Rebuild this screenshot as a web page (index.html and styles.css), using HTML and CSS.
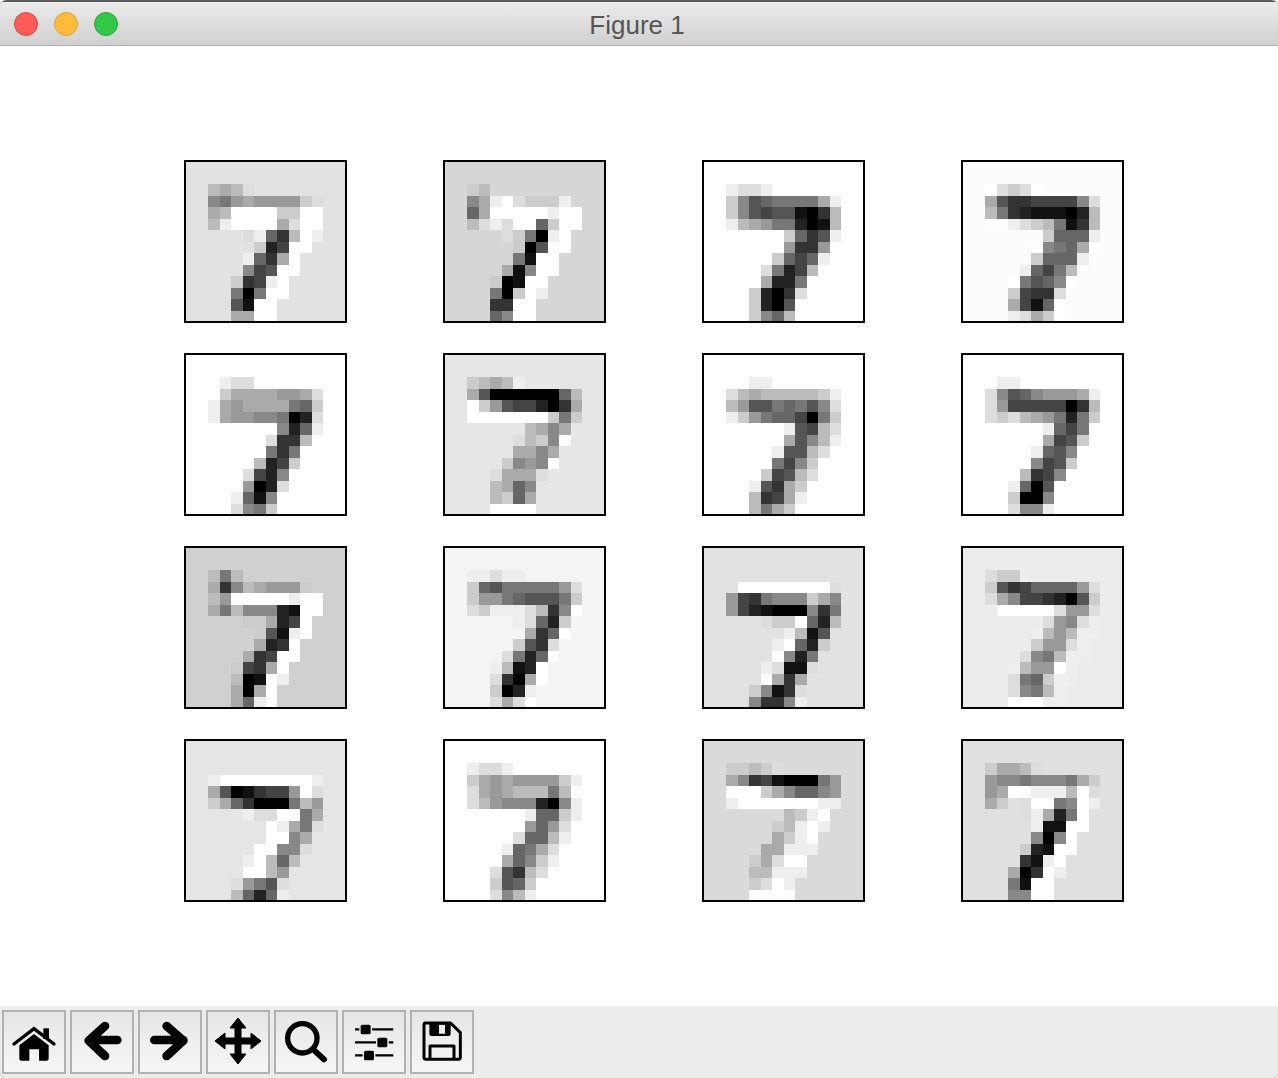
FILE: index.html
```html
<!DOCTYPE html>
<html lang="en">
<head>
  <meta charset="UTF-8" />
  <title>Figure 1</title>
  <link rel="stylesheet" href="styles.css" />
</head>
<body>
  <div class="window">
    <header class="titlebar">
      <div class="lights">
        <span class="light red"></span>
        <span class="light yellow"></span>
        <span class="light green"></span>
      </div>
      <div class="title">Figure 1</div>
    </header>

    <main class="figure">
      <div class="subplots" id="subplots"></div>
    </main>

    <!-- matplotlib toolbar -->
    <footer class="toolbar">
      <button class="tool" title="Home">
        <svg viewBox="12 36 180 180">
          <rect x="130" y="85" width="17" height="32" />
          <path d="M42 132 L102 86 L162 132" class="roof" />
          <path d="M58 136 L102 102 L146 136 V176 Q146 182 140 182 H117 V148 H88 V182 H64 Q58 182 58 176 Z" />
        </svg>
      </button>
      <button class="tool" title="Back">
        <svg viewBox="216 36 180 180">
          <path d="M268 120 H352 M315 78 L266 122 L315 168" class="arrow" />
        </svg>
      </button>
      <button class="tool" title="Forward">
        <svg viewBox="420 36 180 180">
          <path d="M463 120 H550 M500 78 L550 122 L500 168" class="arrow" />
        </svg>
      </button>
      <button class="tool" title="Pan">
        <svg viewBox="208 1012 60 60">
          <rect x="234.500" y="1024" width="7" height="34" />
          <rect x="222" y="1037.500" width="32" height="7" />
          <path d="M215 1041 L225 1033 V1049 Z M261 1041 L251 1033 V1049 Z M238 1018 L230 1028 H246 Z M238 1064 L230 1054 H246 Z" class="head" />
        </svg>
      </button>
      <button class="tool" title="Zoom">
        <svg viewBox="108 36 180 180">
          <circle cx="187" cy="115" r="44" class="lens" />
          <path d="M226 154 L252 178" class="grip" />
        </svg>
      </button>
      <button class="tool" title="Configure subplots">
        <svg viewBox="312 36 180 180">
          <path d="M345 88 H358 M396 88 H460 M345 127 H408 M446 127 H460 M345 166 H368 M406 166 H460" class="rail" />
          <rect x="362" y="74" width="30" height="29" rx="5" />
          <rect x="412" y="113" width="30" height="29" rx="5" />
          <rect x="372" y="152" width="30" height="29" rx="5" />
        </svg>
      </button>
      <button class="tool" title="Save">
        <svg viewBox="516 36 180 180">
          <path d="M554 69 H632 L661 98 V172 Q661 178 655 178 H558 Q552 178 552 172 V75 Q552 69 554 69 Z" class="disk" />
          <path d="M568 69 H632 V102 Q632 108 626 108 H574 Q568 108 568 102 Z M597 74 V101 H615 V74 Z" fill-rule="evenodd" />
          <path d="M570 176 V138 H642 V176" class="label" />
        </svg>
      </button>
    </footer>
  </div>

  <script src="draw.js"></script>
</body>
</html>
```

FILE: styles.css
```css
html, body {
  margin: 0;
  height: 100%;
  background-color: #fff;
  overflow: hidden;
}

.window {
  height: 1078px;
  display: flex;
  flex-direction: column;
  border-radius: 7px;
  overflow: hidden;
  box-shadow: 0 0 2px rgba(0, 0, 0, 0.7);
  font-family: "Liberation Sans", Arial, sans-serif;
}

/* title bar */
.titlebar {
  height: 43px;
  flex: none;
  display: flex;
  align-items: center;
  position: relative;
  border-top: 2px solid #5a5a5a;
  border-bottom: 1px solid #b2b2b2;
  background: linear-gradient(#ebebeb, #d0d0d0);
}

.lights {
  display: flex;
  gap: 16px;
  padding-left: 14px;
}

.light {
  width: 24px;
  height: 24px;
  box-sizing: border-box;
  border-radius: 50%;
  border: 1px solid;
}

.light.red {
  background-color: #fc5b57;
  border-color: #e2463f;
}

.light.yellow {
  background-color: #fdbc40;
  border-color: #dfa033;
}

.light.green {
  background-color: #33c748;
  border-color: #27a93a;
}

.title {
  position: absolute;
  top: 8px;
  left: 0;
  right: 4px;
  text-align: center;
  font-size: 26px;
  color: #555;
}

/* figure */
.figure {
  flex: 1;
  background-color: #fff;
  padding: 114px 0 0 184px;
}

.subplots {
  display: grid;
  grid-template-columns: repeat(4, 163px);
  grid-auto-rows: 163px;
  column-gap: 96px;
  row-gap: 30px;
}

/* the spine sits centred on the edge of the image, like matplotlib draws it */
.axes {
  display: block;
  width: 161px;
  height: 161px;
  margin: 1px;
  outline: 2px solid #000;
  outline-offset: -1px;
  image-rendering: pixelated;
  filter: blur(0.4px);
}

/* toolbar */
.toolbar {
  height: 72px;
  flex: none;
  box-sizing: border-box;
  display: flex;
  gap: 4px;
  padding: 4px 2px;
  background-color: #ececec;
}

.tool {
  width: 64px;
  height: 64px;
  padding: 0;
  box-sizing: border-box;
  border: 2px solid #b1b1b1;
  background: linear-gradient(#e6e6e6, #f6f6f6);
}

.tool svg {
  display: block;
  width: 60px;
  height: 60px;
  fill: #000;
}

.roof {
  fill: none;
  stroke: #000;
  stroke-width: 10;
  stroke-linecap: round;
}

.arrow {
  fill: none;
  stroke: #000;
  stroke-width: 26;
  stroke-linecap: round;
  stroke-linejoin: round;
}

.head {
  stroke: #000;
  stroke-width: 1;
  stroke-linejoin: round;
}

.lens {
  fill: none;
  stroke: #000;
  stroke-width: 16;
}

.grip {
  fill: none;
  stroke: #000;
  stroke-width: 18;
  stroke-linecap: round;
}

.rail {
  fill: none;
  stroke: #000;
  stroke-width: 7;
}

.disk,
.label {
  fill: none;
  stroke: #000;
  stroke-width: 9;
  stroke-linejoin: round;
}
```

FILE: draw.js
```js
// Each digit is 14x14, the rows below start at row 2 and column 2.
// One hex digit per cell (grey level), "." is the background of the plot.
const digits = [
  ["e2", ["babd......", "879a9999cd", "abffffccff", "beffffadff", "...de63bfe", "....c24ff.", "...e63af..", "...845ff..", "..c34ef...", "..707ff...", "..51ff....", "..aaff...."]],
  ["d6", ["cb........", "8aefdccce.", "6afffffeff", "bdedff6cff", "...dc70ef.", "....c05ff.", "....71ff..", "...a18ff..", "..c01ff...", "..70cfe...", "..33ff....", "..68ff...."]],
  ["ff", ["eddef.....", "c8567777ae", "c85455103b", "eba977201b", "...ffc635e", "....f9339.", "...fc646e.", "...d724b..", "..fa227f..", "..c203d...", "..c205f...", "..c86b...."]],
  ["fc", ["fdcdf.....", "a53344448d", "b73211102b", "ffedcb713b", ".....c666e", "....f876af", "....c666e.", "...e647b..", "..f7568f..", "..c433d...", "..a416f...", "..edacf..."]],
  ["ff", [".eddf.....", "fcaaaa99ad", "ea9aaaa76c", "ea9988702d", "...fff826e", ".....d33b.", "....f737f.", "....b24c..", "...d428f..", "...902d...", "..e618f...", "..d87c...."]],
  ["e6", ["cbabe.....", "a50000006b", "fc9544203a", "fffffffc7c", ".....ba8a.", "....dbc8f.", "....aa8a..", "...c898f..", "..daaad...", "..ba68....", "..bc6a....", "..ffff...."]],
  ["ff", [".feef.....", "dbabbbbbce", "b95576758d", "ec9766407c", "..fffe54bd", "....fa58be", "....e55bd.", "...f748cf.", "...c45bd..", "..e53acf..", "..b34ae...", "..b7acf..."]],
  ["ff", [".eef......", "d8568999ae", "d94444403b", "dcdba9727c", "...ffe647f", ".....a45c.", "....e658..", "...f845c..", "...b348...", "..e605f...", "..c008f...", "..d88e...."]],
  ["d0", ["b7b.......", "a38ba999c.", "b9fffffeff", "a7b88821ff", "...cca24f.", "....c51ef.", "....a23f..", "...a34ff..", "..c43af...", "..b01fe...", "..a0af....", "..a6ef...."]],
  ["f4", ["eedee.....", "c65777779d", "c99765557c", "dceeedb38f", "....ed62c.", ".....a36f.", "....c53d..", "...d726f..", "..eb12f...", "..d30af...", "..c02e....", "..dadf...."]],
  ["e2", ["..........", ".ffffffffd", "9437888ca8", "9421000837", "...dccf62b", ".....eb15.", "....ef62c.", "....f827..", "...ed11d..", "...fa3a...", "..c813d...", "..8338e..."]],
  ["ec", ["dcce......", "c53466669d", "da8443205c", ".fffffd99d", ".....d98de", "....eb9bee", "....c99de.", "...d87bee.", "..eb99fe..", "..d76cee..", "..d87be...", "..fffee..."]],
  ["e5", ["..........", "effffffffe", "a5013449fd", "ca630007b9", "...eddff7a", ".....fea7d", ".....ff8a.", "....ff88d.", "...efb6b..", "...ffb9...", "..d975d...", "..b626e..."]],
  ["ff", ["eddef.....", "ca9a9999ce", "da9abbb7bf", "db9888208e", "...ffe66ce", "....f969df", "....d66be.", "...e67adf.", "..fa68ce..", "..d53bdf..", "..c56cf...", "..d8bef..."]],
  ["da", ["ccbcd.....", "a834100079", "fffca86689", "efffffffee", ".....bcef.", "....cbefe.", "....acef..", "...aaeee..", "..cadff...", "..bbeee...", "..cdfe....", "..ffff...."]],
  ["e0", ["caabd.....", "98878887ac", "9affeeebfd", "ac.dff78fe", "...dea27f.", "....e11ff.", "....808f..", "...c21ff..", "...31ef...", "..a03fe...", "..71ff....", "..88ff...."]]
];

const subplots = document.getElementById("subplots");

digits.forEach(([bg, rows]) => {
  const canvas = document.createElement("canvas");
  canvas.className = "axes";
  canvas.width = 14;
  canvas.height = 14;

  const ctx = canvas.getContext("2d");
  ctx.fillStyle = "#" + bg + bg + bg;
  ctx.fillRect(0, 0, 14, 14);

  rows.forEach((row, y) => {
    row.split("").forEach((cell, x) => {
      if (cell === ".") return;
      ctx.fillStyle = "#" + cell + cell + cell + cell + cell + cell;
      ctx.fillRect(x + 2, y + 2, 1, 1);
    });
  });

  subplots.appendChild(canvas);
});
```
